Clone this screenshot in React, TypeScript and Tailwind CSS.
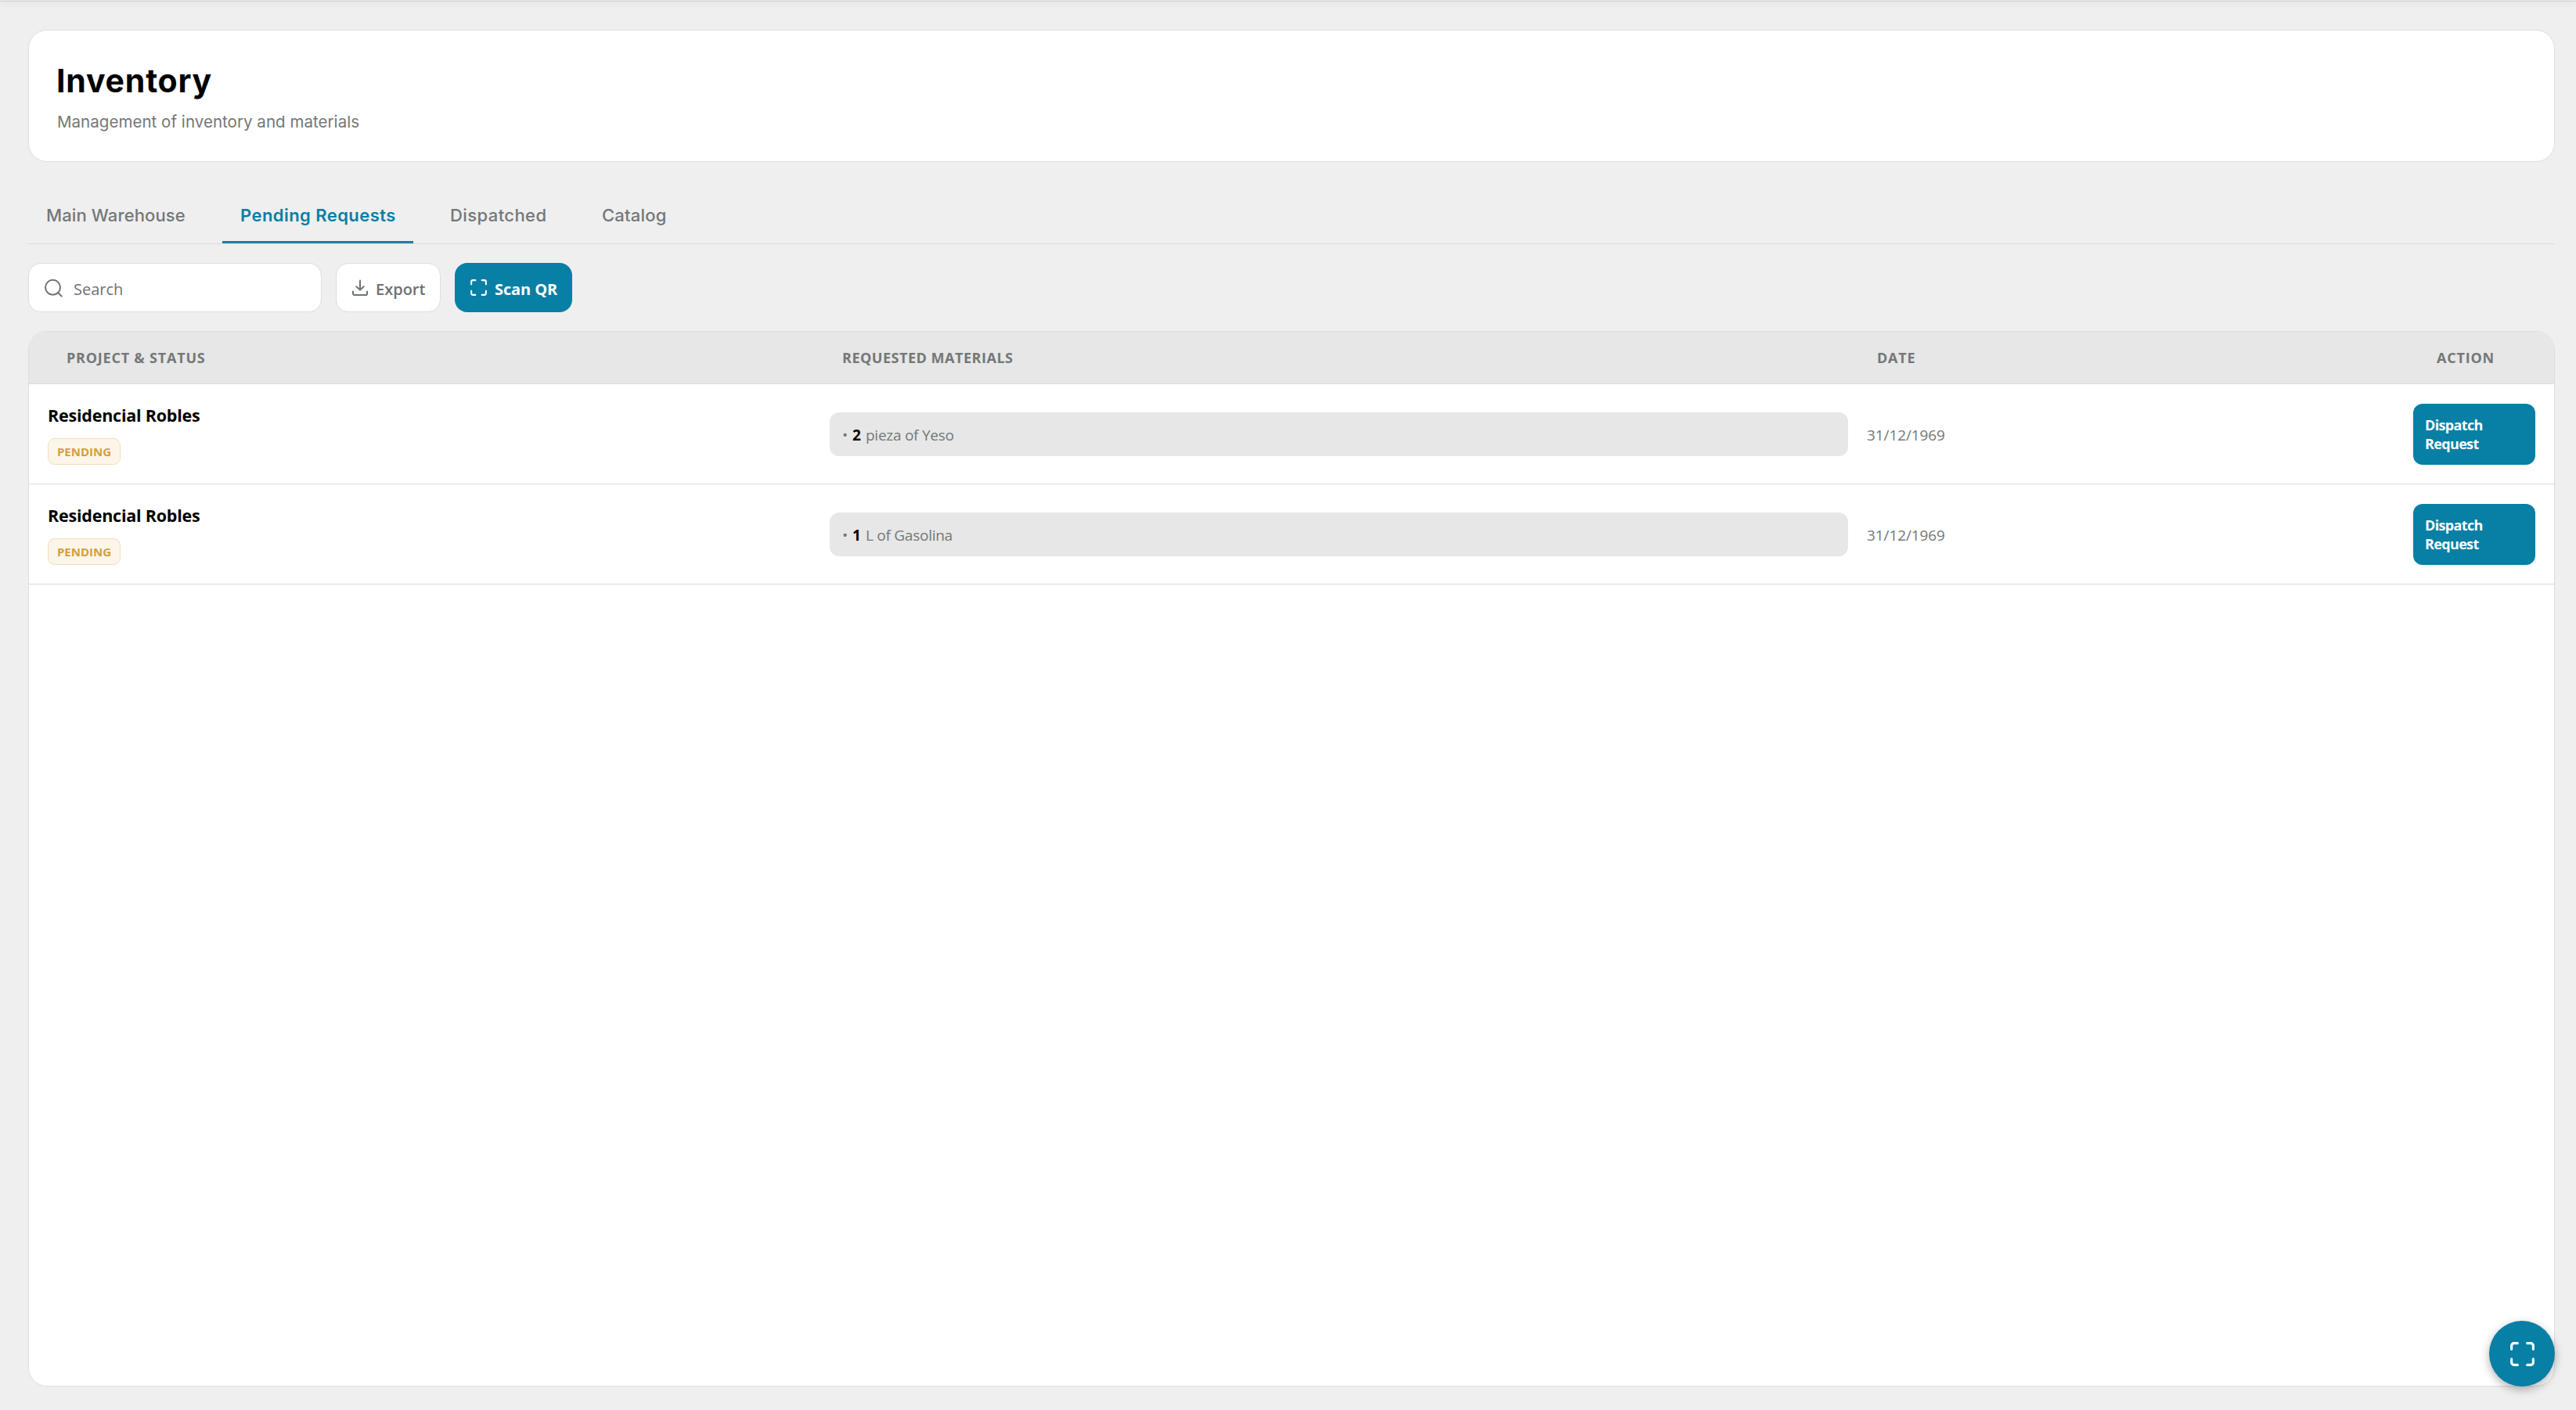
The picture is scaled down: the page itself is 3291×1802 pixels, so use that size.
type IconProps = { className?: string };

const SearchIcon = ({ className }: IconProps) => (
  <svg className={className} viewBox="0 0 24 24" fill="none" stroke="currentColor" strokeWidth="2" strokeLinecap="round">
    <circle cx="11.5" cy="11.3" r="9.5" />
    <path d="m18.4 18.2 4.4 4.4" />
  </svg>
);

const DownloadIcon = ({ className }: IconProps) => (
  <svg className={className} viewBox="0 0 22 22" fill="none" stroke="currentColor" strokeWidth="2" strokeLinecap="round" strokeLinejoin="round">
    <path d="M2 15.5v2.7a1.9 1.9 0 0 0 1.9 1.9h14.2a1.9 1.9 0 0 0 1.9-1.9v-2.7" />
    <path d="m6.4 9.2 4.6 4.4 4.6-4.4" />
    <path d="M11 13.2V1.4" />
  </svg>
);

const ScanIcon = ({ className }: IconProps) => (
  <svg className={className} viewBox="0 0 24 24" fill="none" stroke="currentColor" strokeWidth="2" strokeLinecap="round" strokeLinejoin="round">
    <path d="M8 3H5a2 2 0 0 0-2 2v3" />
    <path d="M21 8V5a2 2 0 0 0-2-2h-3" />
    <path d="M3 16v3a2 2 0 0 0 2 2h3" />
    <path d="M16 21h3a2 2 0 0 0 2-2v-3" />
  </svg>
);

const tabs = [
  { label: "Main Warehouse", style: "w-[224px] tracking-[0.12px] font-medium text-[#737778] border-transparent" },
  { label: "Pending Requests", style: "w-[244px] tracking-[0.43px] font-semibold text-[#087fa5] border-[#1b7f9f]" },
  { label: "Dispatched", style: "w-[170px] tracking-[0.41px] font-medium text-[#737778] border-transparent" },
  { label: "Catalog", style: "w-[130px] tracking-[0.2px] font-medium text-[#737778] border-transparent" },
];

const requests = [
  { project: "Residencial Robles", status: "PENDING", quantity: "2", material: "pieza of Yeso", date: "31/12/1969" },
  { project: "Residencial Robles", status: "PENDING", quantity: "1", material: "L of Gasolina", date: "31/12/1969" },
];

function PageHeader() {
  return (
    <header className="h-[169px] rounded-[24px] border border-[#dcdddd] bg-white pl-[35px] pt-10">
      <h1 className="text-[41px] leading-[48px] font-bold tracking-[0.8px] text-black">Inventory</h1>
      <p className="mt-[14px] pl-px text-[20.5px] leading-[30px] tracking-[0.04px] text-[#737778]">Management of inventory and materials</p>
    </header>
  );
}

function Tabs() {
  return (
    <nav className="mt-9 flex h-[69px] gap-6 border-b border-[#dadbdb]">
      {tabs.map((tab) => (
        <button key={tab.label} className={`flex h-[68px] items-start border-b-[3px] pt-4 pl-[23px] text-left text-[22px] leading-8 whitespace-nowrap ${tab.style}`}>
          {tab.label}
        </button>
      ))}
    </nav>
  );
}

function Toolbar() {
  return (
    <div className="mt-6 flex h-[63px] gap-[18px] font-['Open_Sans',sans-serif] text-[20px] leading-7 text-[#6d7273]">
      <div className="flex w-[375px] items-center rounded-[16px] border border-[#dcdddd] bg-white pl-[19px]">
        <SearchIcon className="size-6" />
        <span className="ml-[14px] pt-1">Search</span>
      </div>
      <button className="flex w-[134px] items-center rounded-[16px] border border-[#dcdddd] bg-white pl-[19px] font-semibold">
        <DownloadIcon className="size-[22px]" />
        <span className="ml-[9px] pt-1">Export</span>
      </button>
      <button className="flex w-[150px] items-center rounded-[16px] bg-[#087fa5] pl-[18px] font-bold text-white">
        <ScanIcon className="size-[25px]" />
        <span className="ml-[8px] pt-1 tracking-[-0.1px]">Scan QR</span>
      </button>
    </div>
  );
}

function RequestsTable() {
  return (
    <section className="mt-6 flex h-[1349px] flex-col overflow-hidden rounded-[24px] border border-[#dcdddd] bg-white font-['Open_Sans',sans-serif]">
      <div className="grid h-[67px] grid-cols-[991px_1322px_715px_1fr] items-center border-b border-[#dadbdb] bg-[#e7e7e7] pl-12 text-[18px] leading-6 font-bold tracking-[0.78px] text-[#737778]">
        <span>PROJECT &amp; STATUS</span>
        <span className="tracking-[0.52px]">REQUESTED MATERIALS</span>
        <span>DATE</span>
        <span>ACTION</span>
      </div>
      {requests.map((request, index) => (
        <div key={index} className="grid h-32 grid-cols-[999px_1325px_698px_156px] items-start border-b border-[#dadbdb] px-6 pt-6">
          <div>
            <div className="pt-px text-[21.5px] leading-[30px] font-bold tracking-[-0.22px] text-black">{request.project}</div>
            <span className="mt-[14px] flex h-[34px] w-[93px] items-center justify-center rounded-[9px] border border-[#f1dfb9] bg-[#fcf5ea] text-[15px] leading-5 font-bold text-[#d3a03c]">
              {request.status}
            </span>
          </div>
          <div className="mt-3 flex h-14 w-[1301px] items-center rounded-[12px] bg-[#e7e7e7] px-4 pt-px text-[19px] leading-7 text-[#737778]">
            <span className="w-[13px] text-[19px]">•</span>
            <span className="w-[17px] font-bold text-black">{request.quantity}</span>
            <span className="tracking-[-0.26px]">{request.material}</span>
          </div>
          <span className="mt-[27px] text-[19px] leading-7 tracking-[-0.1px] text-[#737778]">{request.date}</span>
          <button className="mt-px flex h-[78px] w-[156px] flex-col items-start rounded-[12px] bg-[#087fa5] pt-[15px] pl-[15px] text-[18px] leading-6 font-bold tracking-[-0.65px] text-white">
            <span>Dispatch</span>
            <span>Request</span>
          </button>
        </div>
      ))}
    </section>
  );
}

export default function App() {
  return (
    <div className="relative h-[1802px] w-[3291px] overflow-hidden bg-[#efefef] font-['Inter',sans-serif]">
      <div className="h-0.5 border-b border-[#ced1d1] bg-[#e9eaea] shadow-[0_2px_8px_rgba(0,0,0,0.12)]" />
      <main className="pt-9 pr-[27px] pl-9">
        <PageHeader />
        <Tabs />
        <Toolbar />
        <RequestsTable />
      </main>
      <button className="absolute top-[1688px] left-[3180px] flex size-[84px] items-center justify-center rounded-full bg-[#087fa5] text-white shadow-[0_4px_12px_rgba(0,0,0,0.3)]">
        <ScanIcon className="size-[37px]" />
      </button>
    </div>
  );
}
